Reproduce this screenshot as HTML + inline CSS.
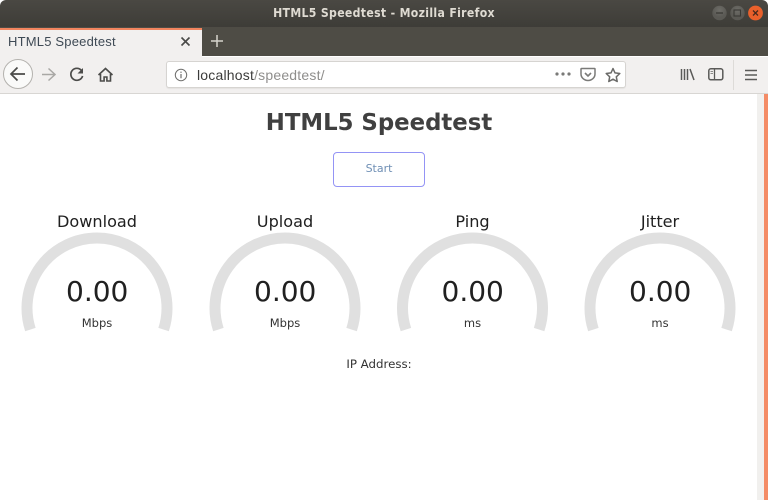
<!DOCTYPE html>
<html>
<head>
<meta charset="utf-8">
<style>
html,body{margin:0;padding:0;width:768px;height:500px;overflow:hidden;background:#fff}
.a{position:absolute}
.t{position:absolute;white-space:nowrap;font-family:"DejaVu Sans",sans-serif;color:#202020;line-height:1}
.c{transform:translateX(-50%)}
.u{position:absolute;white-space:nowrap;font-family:"DejaVu Sans",sans-serif;line-height:1}
</style>
</head>
<body>
<!-- title bar -->
<div class="a" style="left:0;top:0;width:768px;height:28px;background:linear-gradient(#4a4843,#3d3c37);border-radius:6px 6px 0 0"></div>
<div class="u c" style="left:384px;top:7px;font-size:12px;font-weight:bold;color:#dfdbd2;letter-spacing:.03em;transform:translateX(-50%) scaleX(.91)">HTML5 Speedtest - Mozilla Firefox</div>
<svg class="a" style="left:710px;top:4px" width="58" height="20">
<defs><radialGradient id="g" cx=".5" cy=".3"><stop offset="0" stop-color="#6e6d68"/><stop offset="1" stop-color="#5a5954"/></radialGradient></defs>
<circle cx="9.500" cy="9" r="7.200" fill="url(#g)"/><path d="M6 9h7" stroke="#3a3935" stroke-width="1.300"/>
<circle cx="27.500" cy="9" r="7.200" fill="url(#g)"/><rect x="24" y="6" width="6.500" height="6" fill="none" stroke="#3a3935" stroke-width="1.100"/>
<circle cx="45.500" cy="9" r="7.400" fill="#e9602b"/><path d="M43 6.500l5 5M48 6.500l-5 5" stroke="#4a2a1c" stroke-width="1.300"/>
</svg>
<!-- tab bar -->
<div class="a" style="left:0;top:27px;width:768px;height:29px;background:#4e4c45"></div>
<div class="a" style="left:0;top:28px;width:202px;height:29px;background:#f2f0ef"></div>
<div class="a" style="left:0;top:28px;width:202px;height:2px;background:#f2855f"></div>
<div class="u" style="left:8px;top:35px;font-size:13px;color:#3f4a55;font-family:'Liberation Sans',sans-serif;letter-spacing:.2px">HTML5 Speedtest</div>
<svg class="a" style="left:180px;top:36px" width="12" height="12"><path d="M1.500 1.500l8 8M9.500 1.500l-8 8" stroke="#4a4a48" stroke-width="1.600"/></svg>
<svg class="a" style="left:210px;top:34px" width="14" height="14"><path d="M7 1v12M1 7h12" stroke="#d5d3cc" stroke-width="1.500"/></svg>
<!-- nav bar -->
<div class="a" style="left:0;top:57px;width:768px;height:37px;background:#f2f0ef;border-bottom:1px solid #d8d6d3;box-sizing:border-box"></div>
<div class="a" style="left:3px;top:59px;width:30px;height:30px;border-radius:50%;background:#fafaf9;border:1px solid #b4b2ae;box-sizing:border-box"></div>
<svg class="a" style="left:9px;top:66px" width="18" height="16"><path d="M16 8H2M8.500 1.500L2 8l6.500 6.500" fill="none" stroke="#4a4a48" stroke-width="1.700"/></svg>
<svg class="a" style="left:40px;top:67px" width="16" height="15"><path d="M15 7.500H2M8.500 1.500l6.500 6-6.500 6" fill="none" stroke="#a9a8a5" stroke-width="1.500"/></svg>
<svg class="a" style="left:69px;top:67px" width="16" height="15"><path d="M12.500 3.500A6 6 0 1 0 13.600 9" fill="none" stroke="#4c4c4a" stroke-width="1.700"/><path d="M14 1v5.500H8.500z" fill="#4c4c4a"/></svg>
<svg class="a" style="left:97px;top:67px" width="17" height="15"><path d="M1.500 8L8.500 1.500 15.500 8M3.500 7v7h3.600v-4h2.800v4h3.600V7" fill="none" stroke="#4c4c4a" stroke-width="1.600"/></svg>
<div class="a" style="left:166px;top:61px;width:460px;height:27px;background:#fff;border:1px solid #d6d4d1;border-radius:3px;box-sizing:border-box;box-shadow:0 1px 1px rgba(0,0,0,.06)"></div>
<svg class="a" style="left:174px;top:68px" width="14" height="14"><circle cx="7" cy="7" r="5.700" fill="none" stroke="#6f6f6d" stroke-width="1"/><path d="M7 6v4.200M7 3.600v1.300" stroke="#6f6f6d" stroke-width="1.200"/></svg>
<div class="u" style="left:197px;top:68px;font-size:14px;color:#3b3b3a;font-family:'Liberation Sans',sans-serif;letter-spacing:.2px">localhost<span style="color:#8f8e8c">/speedtest/</span></div>
<svg class="a" style="left:555px;top:71px" width="16" height="6"><circle cx="2" cy="3" r="1.600" fill="#7a7a78"/><circle cx="8" cy="3" r="1.600" fill="#7a7a78"/><circle cx="14" cy="3" r="1.600" fill="#7a7a78"/></svg>
<svg class="a" style="left:580px;top:67px" width="16" height="15"><path d="M1.500 1.500h13a.5.5 0 0 1 .5.5v5a7 6.500 0 0 1-14 0V2a.5.5 0 0 1 .5-.5z" fill="none" stroke="#7a7a78" stroke-width="1.500"/><path d="M5 6l3 3 3-3" fill="none" stroke="#7a7a78" stroke-width="1.600"/></svg>
<svg class="a" style="left:605px;top:67px" width="16" height="16"><path d="M8 1.500l2 4.400 4.800.6-3.500 3.300.9 4.700L8 12.200l-4.200 2.300.9-4.700L1.200 6.500l4.800-.6z" fill="none" stroke="#6a6a68" stroke-width="1.500" stroke-linejoin="round"/></svg>
<svg class="a" style="left:680px;top:68px" width="15" height="13"><path d="M1.500 1v11M4.500 1v11M7.500 1v11M10 1l4 11" stroke="#5a5a58" stroke-width="1.500" fill="none"/></svg>
<svg class="a" style="left:708px;top:68px" width="16" height="13"><rect x=".8" y=".8" width="14" height="11" rx="2" fill="none" stroke="#5a5a58" stroke-width="1.500"/><path d="M6.500 1v11" stroke="#5a5a58" stroke-width="1.300"/><path d="M2.500 3.500h2.500M2.500 5.500h2.500" stroke="#8a8a88" stroke-width="1"/></svg>
<div class="a" style="left:733px;top:60px;width:1px;height:30px;background:#dddbd8"></div>
<svg class="a" style="left:745px;top:69px" width="12" height="12"><path d="M0 1.500h12M0 6h12M0 10.500h12" stroke="#5a5a58" stroke-width="1.500"/></svg>
<!-- scrollbar -->
<div class="a" style="left:757px;top:94px;width:7px;height:406px;background:#f1f0ee"></div>
<div class="a" style="left:764px;top:94px;width:4px;height:406px;background:#f48c66"></div>
<!-- content -->
<div class="t c" style="left:379px;top:112px;font-size:22.800px;font-weight:bold;color:#404040">HTML5 Speedtest</div>
<div class="a" style="left:333px;top:152px;width:92px;height:35px;border:1.300px solid #9494f5;border-radius:4px;box-sizing:border-box"></div>
<div class="t c" style="left:379px;top:163px;font-size:11px;color:#6f8fb5">Start</div>

<div class="t c" style="left:97px;top:214px;font-size:16.100px">Download</div>
<div class="t c" style="left:285px;top:214px;font-size:16.100px">Upload</div>
<div class="t c" style="left:472.500px;top:214px;font-size:16.100px">Ping</div>
<div class="t c" style="left:660px;top:214px;font-size:16.100px">Jitter</div>

<svg class="a" style="left:0;top:220px" width="768" height="120">
<g fill="none" stroke="#e0e0e0" stroke-width="11">
<path d="M30.400 109.600A70 70 0 1 1 163.600 109.600"/>
<path d="M218.400 109.600A70 70 0 1 1 351.600 109.600"/>
<path d="M405.900 109.600A70 70 0 1 1 539.100 109.600"/>
<path d="M593.400 109.600A70 70 0 1 1 726.600 109.600"/>
</g>
</svg>

<div class="t c" style="left:97.200px;top:278px;font-size:28px">0.00</div>
<div class="t c" style="left:285.200px;top:278px;font-size:28px">0.00</div>
<div class="t c" style="left:472.700px;top:278px;font-size:28px">0.00</div>
<div class="t c" style="left:660.200px;top:278px;font-size:28px">0.00</div>

<div class="t c" style="left:97px;top:318px;font-size:11.500px;color:#333">Mbps</div>
<div class="t c" style="left:285px;top:318px;font-size:11.500px;color:#333">Mbps</div>
<div class="t c" style="left:472.500px;top:318px;font-size:11.500px;color:#333">ms</div>
<div class="t c" style="left:660px;top:318px;font-size:11.500px;color:#333">ms</div>

<div class="t c" style="left:379px;top:359px;font-size:11.800px;color:#333">IP Address:</div>
</body>
</html>
